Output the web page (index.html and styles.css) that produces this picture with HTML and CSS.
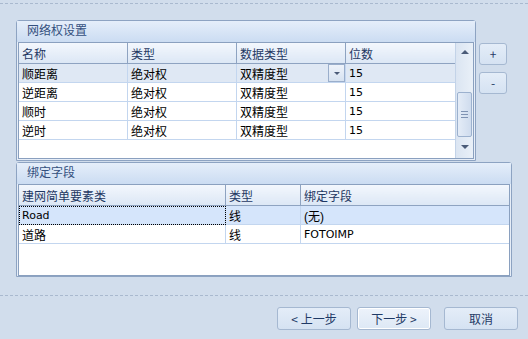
FILE: index.html
```html
<!DOCTYPE html>
<html lang="zh-CN">
  <head>
    <meta charset="utf-8">
    <link rel="stylesheet" href="styles.css">
  </head>
  <body>
    <div class="rule top-rule"></div>
    <div class="content">
      <div class="upper">
        <div class="group group-weights">
          <div class="group-title">网络权设置</div>
          <div class="grid">
            <div class="grid-body">
              <table class="table table-weights">
                <tr class="head">
                  <td>名称</td><td>类型</td><td>数据类型</td><td>位数</td>
                </tr>
                <tr class="focused">
                  <td>顺距离</td><td>绝对权</td>
                  <td class="combo-cell">双精度型<span class="combo-btn"><span class="tri"></span></span></td>
                  <td class="num">15</td>
                </tr>
                <tr><td>逆距离</td><td>绝对权</td><td>双精度型</td><td class="num">15</td></tr>
                <tr><td>顺时</td><td>绝对权</td><td>双精度型</td><td class="num">15</td></tr>
                <tr><td>逆时</td><td>绝对权</td><td>双精度型</td><td class="num">15</td></tr>
              </table>
            </div>
            <div class="scrollbar">
              <span class="arrow up"></span>
              <span class="thumb"><span class="grip"></span></span>
              <span class="arrow down"></span>
            </div>
          </div>
        </div>
        <div class="side-buttons">
          <button class="btn small">+</button>
          <button class="btn small">-</button>
        </div>
      </div>

      <div class="group group-fields">
        <div class="group-title">绑定字段</div>
        <div class="grid">
          <div class="grid-body">
            <table class="table table-fields">
              <tr class="head">
                <td>建网简单要素类</td><td>类型</td><td>绑定字段</td>
              </tr>
              <tr class="selected">
                <td class="focus-cell"><span class="latin">Road</span></td><td>线</td><td>(无)</td>
              </tr>
              <tr><td>道路</td><td>线</td><td class="latin">FOTOIMP</td></tr>
            </table>
          </div>
        </div>
      </div>
    </div>
    <div class="rule bottom-rule"></div>
    <div class="footer">
      <button class="btn wide">&lt; 上一步</button>
      <button class="btn wide hot">下一步 &gt;</button>
      <button class="btn wide cancel">取消</button>
    </div>
  </body>
</html>
```

FILE: styles.css
```css
body {
  margin: 0;
  width: 528px;
  height: 339px;
  overflow: hidden;
  background: #d1ddec;
  font-family: "Liberation Sans", "Noto Sans CJK SC", sans-serif;
  font-size: 12px;
  color: #000;
}

.rule {
  border-top: 1px dashed #a9b9cf;
}

.top-rule {
  margin-top: 3px;
}

.content {
  padding: 16px 0 0 16px;
}

.upper {
  display: flex;
  align-items: flex-start;
}

.group {
  border: 1px solid #8da3c2;
  border-radius: 3px 3px 0 0;
  background: #e7eef8;
}

.group-weights {
  width: 458px;
  height: 139px;
}

.group-fields {
  width: 494px;
  height: 113px;
  margin-top: 1px;
}

.group-title {
  height: 21px;
  line-height: 21px;
  padding-left: 10px;
  color: #34507e;
  background: linear-gradient(#e5eefa, #cbdcf2);
  font-size: 12px;
}

.grid {
  display: flex;
  margin: 0 1px;
  border: 1px solid #8aa0bf;
  background: #fff;
}

.group-weights .grid {
  height: 115px;
}

.group-fields .grid {
  height: 90px;
}

.grid-body {
  flex: 1;
}

.table {
  width: 100%;
  border-collapse: collapse;
  table-layout: fixed;
}

.table td {
  height: 18px;
  padding: 0 0 0 3px;
  border-right: 1px solid #c3d6ef;
  border-bottom: 1px solid #c3d6ef;
  white-space: nowrap;
  overflow: hidden;
}

.table .head td {
  height: 20px;
  color: #1f3863;
  background: linear-gradient(#f3f7fd, #dce7f5);
  border-right: 1px solid #8ea3c1;
  border-bottom: 1px solid #8ea3c1;
}

.table-weights td:nth-child(1) { width: 105px; }
.table-weights td:nth-child(2) { width: 105px; }
.table-weights td:nth-child(3) { width: 105px; }
.table-weights td:last-child { border-right: none; }

.table-fields td:nth-child(1) { width: 203px; }
.table-fields td:nth-child(2) { width: 71px; }
.table-fields td:last-child { border-right: none; }

.focused td {
  background: #dfe8f4;
}

.selected td {
  background: #d5e5fb;
}

.focus-cell {
  outline: 1px dotted #000;
  outline-offset: -1px;
}

.num,
.latin {
  font-family: "DejaVu Sans", sans-serif;
  font-size: 11px;
}

.combo-cell {
  position: relative;
}

.combo-btn {
  position: absolute;
  right: 0;
  top: 0;
  width: 15px;
  height: 16px;
  border: 1px solid #9aaecb;
  background: linear-gradient(#eef3fa, #d6e2f1);
}

.tri {
  position: absolute;
  left: 5px;
  top: 7px;
  border-left: 3px solid transparent;
  border-right: 3px solid transparent;
  border-top: 3px solid #4a5b78;
}

.scrollbar {
  width: 17px;
  display: flex;
  flex-direction: column;
  align-items: center;
  background: linear-gradient(90deg, #dbe5f2, #e9f0f8);
  border-left: 1px solid #c3d3e8;
}

.arrow {
  width: 0;
  height: 0;
  border-left: 4px solid transparent;
  border-right: 4px solid transparent;
}

.arrow.up {
  margin-top: 7px;
  border-bottom: 4px solid #4a5b78;
}

.arrow.down {
  margin-top: 8px;
  border-top: 4px solid #4a5b78;
}

.thumb {
  margin-top: 38px;
  width: 13px;
  height: 43px;
  border: 1px solid #9cb1ce;
  border-radius: 2px;
  background: linear-gradient(90deg, #e4ecf7, #cfdcee);
  display: flex;
  align-items: center;
  justify-content: center;
}

.grip {
  width: 7px;
  height: 5px;
  border-top: 1px solid #7f93b3;
  border-bottom: 1px solid #7f93b3;
  position: relative;
}

.grip::after {
  content: "";
  position: absolute;
  left: 0;
  right: 0;
  top: 2px;
  border-top: 1px solid #7f93b3;
}

.side-buttons {
  display: flex;
  flex-direction: column;
  gap: 7px;
  margin: 23px 0 0 3px;
}

.btn {
  font-family: "Noto Sans CJK SC", sans-serif;
  font-size: 12px;
  color: #1f3a66;
  border: 1px solid #a5b8d1;
  border-radius: 3px;
  background: linear-gradient(#e4edf8, #d5e2f2);
  padding: 0;
}

.btn.small {
  width: 28px;
  height: 22px;
  line-height: 18px;
}

.bottom-rule {
  margin-top: 18px;
}

.footer {
  display: flex;
  gap: 6px;
  padding: 11px 0 0 277px;
}

.btn.wide {
  width: 74px;
  height: 23px;
}

.btn.hot {
  box-shadow: inset 0 0 0 1px #fff;
  background: linear-gradient(#edf3fb, #dde8f5);
}

.btn.cancel {
  margin-left: 7px;
}
```
